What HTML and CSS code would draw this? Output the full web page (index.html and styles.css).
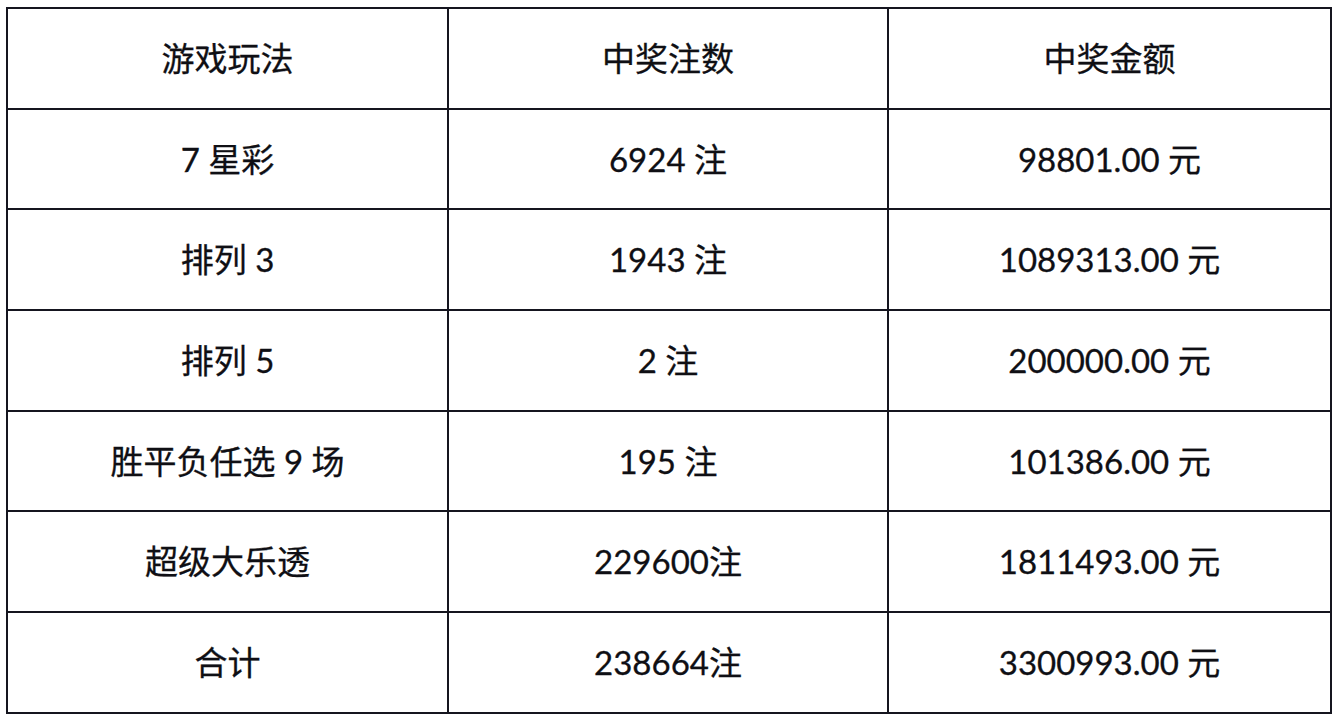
FILE: index.html
```html
<!DOCTYPE html>
<html lang="zh">
<head>
<meta charset="utf-8">
<title>中奖统计</title>
<link rel="stylesheet" href="styles.css">
</head>
<body>
<table class="prize-table">
  <colgroup>
    <col class="c1"><col class="c2"><col class="c3">
  </colgroup>
  <tbody>
    <tr><td>游戏玩法</td><td>中奖注数</td><td>中奖金额</td></tr>
    <tr><td>7 星彩</td><td>6924 注</td><td>98801.00 元</td></tr>
    <tr><td>排列 3</td><td>1943 注</td><td>1089313.00 元</td></tr>
    <tr><td>排列 5</td><td>2 注</td><td>200000.00 元</td></tr>
    <tr><td>胜平负任选 9 场</td><td>195 注</td><td>101386.00 元</td></tr>
    <tr><td>超级大乐透</td><td>229600注</td><td>1811493.00 元</td></tr>
    <tr><td>合计</td><td>238664注</td><td>3300993.00 元</td></tr>
  </tbody>
</table>
</body>
</html>
```
FILE: styles.css
```css
html, body {
  margin: 0;
  padding: 0;
  background: #ffffff;
}
body {
  padding: 7px 0 0 6px;
  font-family: "Lato", "Noto Sans CJK SC", sans-serif;
  color: #0f0f14;
}
.prize-table {
  border-collapse: collapse;
  table-layout: fixed;
  width: 1324px;
}
.c1 { width: 441px; }
.c2 { width: 440px; }
.c3 { width: 443px; }
.prize-table td {
  border: 2px solid #15151f;
  height: 98.7px;
  padding: 0;
  text-align: center;
  vertical-align: middle;
  font-size: 33px;
  line-height: 1;
  -webkit-text-stroke: 0.3px #0f0f14;
}
```
